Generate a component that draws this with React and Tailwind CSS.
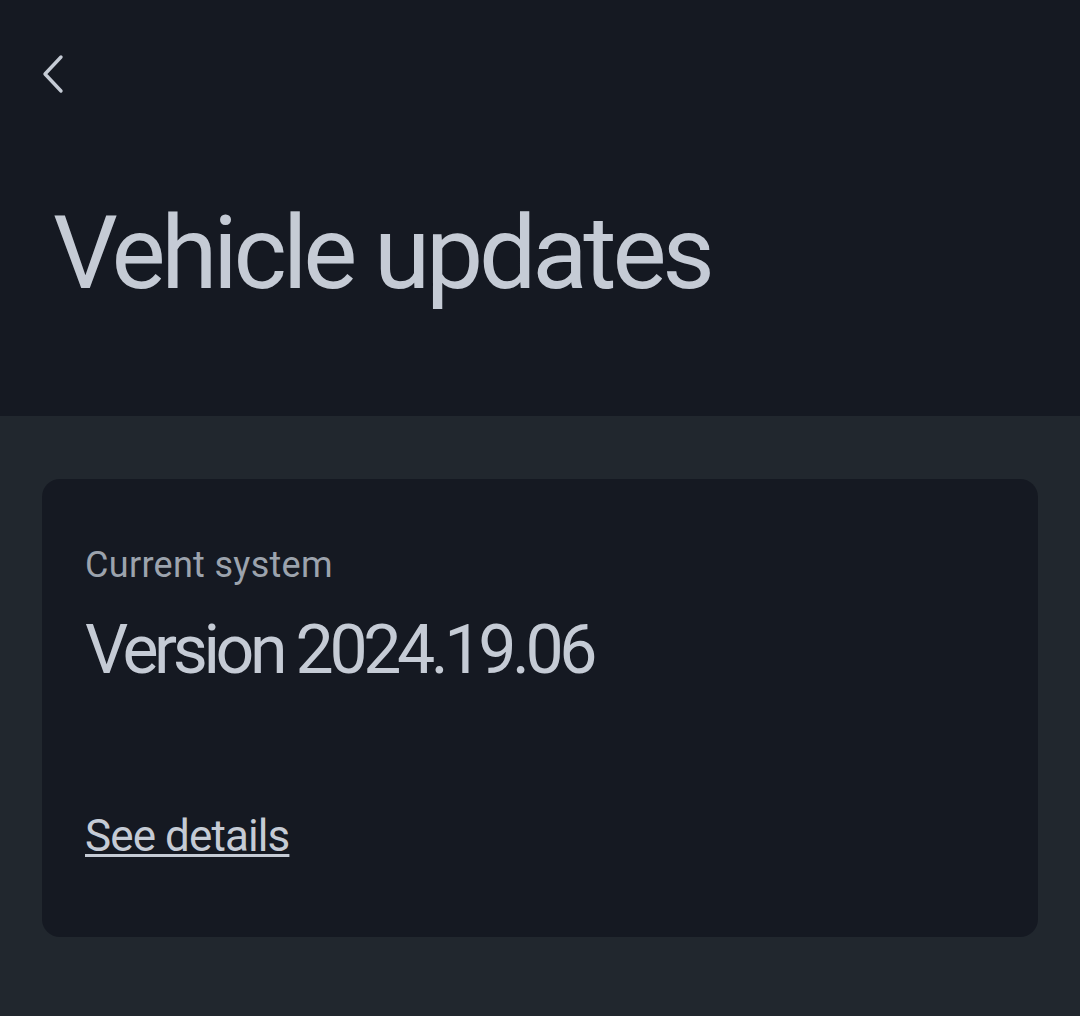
import React from 'react';

export default function App() {
    return (
        <div className="min-h-[1016px] w-[1080px] bg-[#21272e] font-['Roboto',sans-serif] text-[#c5cbd5]">
            <header className="h-[416px] bg-[#151922] px-[40px] pt-[52px]">
                <button type="button" className="flex h-[44px] w-[30px] items-center justify-start">
                    <svg width="26" height="42" viewBox="0 0 26 42" fill="none" stroke="#c5cbd5" strokeWidth="3.4" strokeLinecap="round" strokeLinejoin="round">
                        <path d="M21 4 L5 21 L21 38" />
                    </svg>
                </button>
                <h1 className="mt-[106px] pl-[13px] text-[102px] font-normal leading-none tracking-[-4.3px]">
                    Vehicle updates
                </h1>
            </header>
            <main className="px-[42px] pt-[63px]">
                <section className="flex h-[458px] flex-col rounded-[18px] bg-[#151922] px-[43px] pt-[68px]">
                    <p className="text-[36px] leading-none tracking-[0.3px] text-[#9ca3ad]">Current system</p>
                    <p className="mt-[33px] text-[68px] leading-none tracking-[-4.4px]">Version 2024.19.06</p>
                    <a href="#" className="mt-[130px] self-start text-[44px] leading-none tracking-[-0.9px] underline decoration-[3px] underline-offset-[3px]">
                        See details
                    </a>
                </section>
            </main>
        </div>
    );
}
